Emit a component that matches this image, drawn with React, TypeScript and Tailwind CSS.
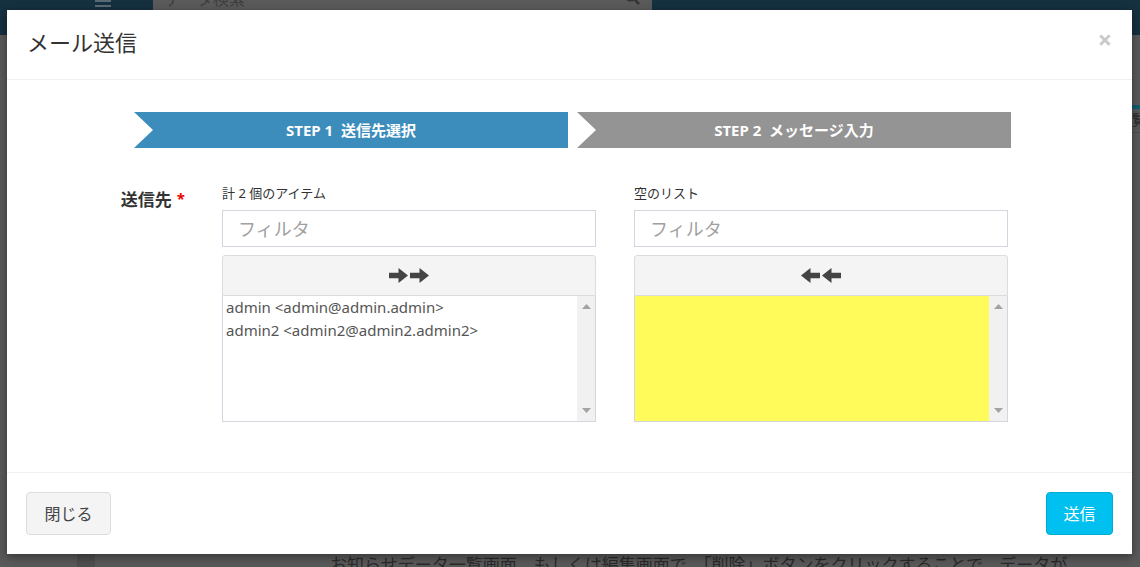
import React from "react";

const font = { fontFamily: '"Noto Sans", "Noto Sans CJK JP", sans-serif' };

function Arrow({ dir }: { dir: "left" | "right" }) {
  return (
    <svg width="19" height="15" viewBox="0 0 18 14" className={dir === "left" ? "-scale-x-100" : ""}>
      <path d="M0 4.5 H9 V0 L18 7 L9 14 V9.5 H0 Z" fill="#444" />
    </svg>
  );
}

function ScrollBar() {
  return (
    <div className="w-[18px] bg-[#f1f1f1] flex flex-col items-center justify-between py-[8px]">
      <svg width="9" height="5" viewBox="0 0 9 5"><path d="M0 5 L4.5 0 L9 5 Z" fill="#a3a3a3" /></svg>
      <svg width="9" height="5" viewBox="0 0 9 5"><path d="M0 0 L4.5 5 L9 0 Z" fill="#a3a3a3" /></svg>
    </div>
  );
}

function DualColumn({
  caption,
  dir,
  items,
  highlight,
}: {
  caption: string;
  dir: "left" | "right";
  items: string[];
  highlight?: boolean;
}) {
  return (
    <div className="w-[374px] flex flex-col">
      <div className="text-[13px] leading-[17px] text-[#333] mb-[8px]">{caption}</div>
      <input
        className="h-[37px] border border-[#d2d6de] px-[15px] text-[18px] text-[#555] placeholder:text-[#a0a0a0] outline-none"
        placeholder="フィルタ"
        style={font}
      />
      <div className="mt-[8px] h-[41px] bg-[#f4f4f4] border border-[#dcdcdc] rounded-t-[3px] flex items-center justify-center gap-[2px]">
        <Arrow dir={dir} />
        <Arrow dir={dir} />
      </div>
      <div className="h-[126px] border border-t-0 border-[#d2d6de] flex">
        <div className={`flex-1 ${highlight ? "bg-[#fffb5b]" : "bg-white"} pl-[3px] pt-0`}>
          {items.map((t) => (
            <div key={t} className="text-[15px] leading-[23px] text-[#555]">
              {t}
            </div>
          ))}
        </div>
        <ScrollBar />
      </div>
    </div>
  );
}

export default function App() {
  return (
    <div className="relative w-[1140px] h-[567px] overflow-hidden bg-[#595959]" style={font}>
      {/* dimmed page behind */}
      <div className="h-[35px] bg-[#15303f] flex items-start">
        <div className="ml-[95px] mt-0 flex flex-col gap-[3px] w-[16px]">
          <div className="h-[2px] bg-[#5a6a73]" />
          <div className="h-[2px] bg-[#5a6a73]" />
        </div>
        <div className="ml-[42px] w-[499px] h-[35px] bg-[#5a5a5a] flex items-start justify-between px-[12px] -mt-[13px]">
          <span className="text-[16px] text-[#3e3e3e]">データ検索</span>
          <svg width="16" height="16" viewBox="0 0 16 16" className="mt-[2px]">
            <circle cx="6.5" cy="6.5" r="5" stroke="#333" strokeWidth="2" fill="none" />
            <path d="M10 10 L15 15" stroke="#333" strokeWidth="2.5" />
          </svg>
        </div>
      </div>
      <div className="flex">
        <div className="w-[77px]" />
        <div className="w-[18px] h-[532px] bg-[#4e4e4e]" />
        <div className="flex-1 flex flex-col items-end">
          <div className="mt-[70px] w-[8px] h-[4px] bg-[#0e5d70]" />
          <div className="w-[8px] h-[24px] border-b border-[#4d4d4d] text-[14px] text-[#2a2a2a] overflow-hidden">覧</div>
          <div className="mt-[422px] pl-[235px] self-start text-[17px] leading-[20px] text-[#2a2a2a] whitespace-nowrap">
            お知らせデータ一覧画面、もしくは編集画面で、「削除」ボタンをクリックすることで、データが
          </div>
        </div>
      </div>

      {/* modal */}
      <div className="absolute left-[7px] top-[10px] w-[1125px] h-[544px] bg-white shadow-[0_3px_9px_rgba(0,0,0,0.4)] flex flex-col">
        <div className="h-[70px] border-b border-[#f0f0f0] flex items-center justify-between pl-[20px] pr-[20px]">
          <div className="text-[22px] text-[#333] mt-[-4px]">メール送信</div>
          <div className="text-[25px] font-bold text-[#c8c8c8] leading-none mt-[-11px]">×</div>
        </div>

        <div className="flex-1 flex flex-col">
          <div className="mt-[32px] ml-[127px] flex gap-[9px]">
            <div className="w-[434px] h-[36px] bg-[#3c8dbc] [clip-path:polygon(0_0,100%_0,100%_100%,0_100%,19px_50%)] flex items-center justify-center text-white text-[15px] font-bold">
              STEP 1&nbsp;&nbsp;送信先選択
            </div>
            <div className="w-[434px] h-[36px] bg-[#959494] [clip-path:polygon(0_0,100%_0,100%_100%,0_100%,19px_50%)] flex items-center justify-center text-white text-[15px] font-bold">
              STEP 2&nbsp;&nbsp;メッセージ入力
            </div>
          </div>

          <div className="mt-[37px] flex">
            <div className="w-[215px] flex justify-end items-start pr-[37px] pt-[2px]">
              <span className="text-[17px] font-bold text-[#333]">送信先</span>
              <span className="text-[15px] font-bold text-[#e00] ml-[5px]">*</span>
            </div>
            <div className="flex gap-[38px]">
              <DualColumn
                caption="計 2 個のアイテム"
                dir="right"
                items={["admin <admin@admin.admin>", "admin2 <admin2@admin2.admin2>"]}
              />
              <DualColumn caption="空のリスト" dir="left" items={[]} highlight />
            </div>
          </div>
        </div>

        <div className="h-[82px] border-t border-[#f0f0f0] flex items-center justify-between px-[19px]">
          <button className="h-[43px] w-[85px] bg-[#f4f4f4] border border-[#ddd] rounded-[4px] text-[16px] text-[#444]">
            閉じる
          </button>
          <button className="h-[43px] w-[67px] bg-[#00c0ef] border border-[#00acd6] rounded-[4px] text-[16px] text-white">
            送信
          </button>
        </div>
      </div>
    </div>
  );
}
